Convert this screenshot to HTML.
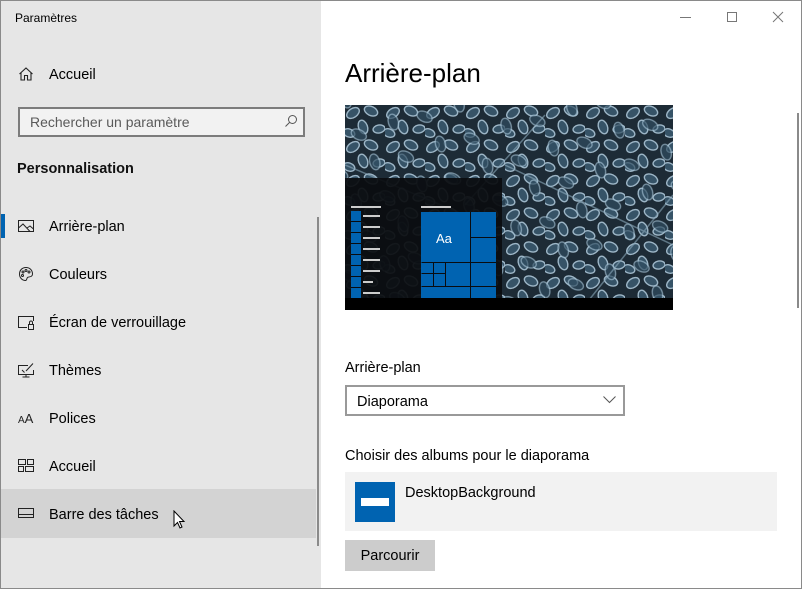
<!DOCTYPE html>
<html><head><meta charset="utf-8"><style>
*{margin:0;padding:0;box-sizing:border-box}
body{width:802px;height:589px;overflow:hidden;font-family:"Liberation Sans",sans-serif;color:#000;background:#fff;position:relative}
.win{position:absolute;left:0;top:0;width:802px;height:589px;border:1px solid #8a8a8a}
.left{position:absolute;left:1px;top:1px;width:320px;height:587px;background:#e6e6e6}
.abs{position:absolute}
.nav{position:absolute;left:48px;font-size:14.5px;color:#000}
.ic{position:absolute;left:17px}
</style></head><body>
<div class="win"></div>
<div class="left">
  <div class="abs" style="left:14px;top:10px;font-size:12px">Paramètres</div>
  <svg class="ic" style="left:17px;top:65px" width="16" height="16" viewBox="0 0 16 16" fill="none" stroke="#222" stroke-width="1.1"><path d="M1.5 8 L8 2 L14.5 8 M3 6.6 V14 H6.5 V9.5 H9.5 V14 H13 V6.6"/></svg>
  <div class="nav" style="top:66px">Accueil</div>
  <div class="abs" style="left:17px;top:106px;width:287px;height:30px;border:2px solid #7c7c7c;background:#f2f2f2"></div>
  <div class="abs" style="left:29px;top:113px;font-size:14px;color:#5a5a5a">Rechercher un paramètre</div>
  <svg class="abs" style="left:283px;top:113px" width="14" height="14" viewBox="0 0 14 14" fill="none" stroke="#555" stroke-width="1"><circle cx="8.5" cy="5.5" r="4"/><path d="M5.6 8.4 L1.5 12.5"/></svg>
  <div class="abs" style="left:16px;top:160px;font-size:14.5px;font-weight:bold;color:#111">Personnalisation</div>
  <div class="abs" style="left:0;top:213px;width:4px;height:24px;background:#0063b1"></div>
  <div class="abs" style="left:316px;top:216px;width:2px;height:329px;background:#8a8a8a"></div>
  <div class="abs" style="left:0;top:488px;width:315px;height:49px;background:#d3d3d3"></div>
  <svg class="ic" style="top:218px" width="17" height="15" viewBox="0 0 17 15" fill="none" stroke="#222" stroke-width="1"><rect x="0.5" y="1.5" width="15" height="11"/><path d="M0.5 9 L5 5 L12 12.5 M9 9 L12 7 L15.5 10"/></svg>
  <div class="nav" style="top:218px">Arrière-plan</div>
  <svg class="ic" style="top:265px" width="16" height="16" viewBox="0 0 16 16" fill="none" stroke="#222" stroke-width="1"><path d="M8 1.5 C3.5 1.5 1.5 5 1.5 8 C1.5 12 4.5 14.5 7.5 14.5 C9 14.5 8.5 12.5 9.5 11.5 C10.5 10.5 14.5 11.5 14.5 8 C14.5 4 11.5 1.5 8 1.5Z"/><circle cx="5" cy="6" r="1"/><circle cx="8" cy="4.5" r="1"/><circle cx="11" cy="6" r="1"/><circle cx="4.5" cy="9.5" r="1"/></svg>
  <div class="nav" style="top:266px">Couleurs</div>
  <svg class="ic" style="top:314px" width="17" height="16" viewBox="0 0 17 16" fill="none" stroke="#222" stroke-width="1"><path d="M9 12.5 H0.5 V1.5 H15.5 V6"/><rect x="10.5" y="9.5" width="5" height="5"/><path d="M11.5 9.5 V7.5 A1.5 1.5 0 0 1 14.5 7.5 V9.5"/></svg>
  <div class="nav" style="top:314px">Écran de verrouillage</div>
  <svg class="ic" style="top:361px" width="17" height="16" viewBox="0 0 17 16" fill="none" stroke="#222" stroke-width="1"><path d="M10 3.5 H0.5 V12.5 H15.5 V8 M8 12.5 V15 M4.5 15 H11.5 M8 9 L15 1.5 M4 8 L6.5 10.5"/></svg>
  <div class="nav" style="top:362px">Thèmes</div>
  <div class="abs" style="left:17px;top:410px;font-size:10px;color:#222">A<span style="font-size:13px">A</span></div>
  <div class="nav" style="top:410px">Polices</div>
  <svg class="ic" style="top:458px" width="17" height="14" viewBox="0 0 17 14" fill="none" stroke="#222" stroke-width="1"><rect x="0.5" y="0.5" width="7" height="5"/><rect x="9.5" y="0.5" width="6" height="5"/><rect x="0.5" y="7.5" width="5" height="5"/><rect x="7.5" y="7.5" width="8" height="5"/></svg>
  <div class="nav" style="top:458px">Accueil</div>
  <svg class="ic" style="top:507px" width="17" height="12" viewBox="0 0 17 12" fill="none" stroke="#222" stroke-width="1"><rect x="0.5" y="0.5" width="15" height="9"/><path d="M0.5 6.5 H15.5"/></svg>
  <div class="nav" style="top:506px">Barre des tâches</div>
  <svg class="abs" style="left:172px;top:509px" width="14" height="20" viewBox="0 0 14 20"><path d="M1 1 V16 L4.5 12.5 L7 18 L9 17 L6.5 11.5 L11 11.5 Z" fill="#fff" stroke="#000" stroke-width="1"/></svg>
</div>
<svg class="abs" style="left:680px;top:11px" width="110" height="14" viewBox="0 0 110 14" fill="none" stroke="#777" stroke-width="1"><path d="M0 6.5 H11"/><rect x="47.5" y="1.5" width="9" height="9"/><path d="M93 1 L103 11 M103 1 L93 11"/></svg>
<div class="abs" style="left:797px;top:113px;width:2px;height:195px;background:#8a8a8a"></div>
<div class="abs" style="left:345px;top:58px;font-size:26px;color:#000">Arrière-plan</div>
<svg class="abs" style="left:345px;top:105px" width="328" height="205" viewBox="0 0 328 205">
  <defs>
    <pattern id="lv" width="40" height="34" patternUnits="userSpaceOnUse">
      <g fill="#3a5a70" stroke="#b4cfe0" stroke-width="1.4">
        <ellipse cx="8" cy="8" rx="7" ry="4.5" transform="rotate(-35 8 8)"/>
        <ellipse cx="26" cy="6" rx="7" ry="4.5" transform="rotate(25 26 6)"/>
        <ellipse cx="18" cy="22" rx="7" ry="4.5" transform="rotate(70 18 22)"/>
        <ellipse cx="34" cy="24" rx="6" ry="4" transform="rotate(-10 34 24)"/>
        <ellipse cx="4" cy="28" rx="6" ry="4" transform="rotate(20 4 28)"/>
      </g>
    </pattern>
    <pattern id="lv2" width="52" height="44" patternUnits="userSpaceOnUse" patternTransform="rotate(25) translate(13 9)">
      <g fill="#2f4c60" stroke="#9fbdd0" stroke-width="1.3">
        <ellipse cx="12" cy="12" rx="8" ry="5"/>
        <ellipse cx="38" cy="30" rx="8" ry="5" transform="rotate(50 38 30)"/>
      </g>
    </pattern>
  </defs>
  <rect width="328" height="205" fill="#1d2b36"/>
  <rect width="328" height="205" fill="url(#lv)" opacity="0.85"/>
  <rect width="328" height="205" fill="url(#lv2)" opacity="0.7"/>
  <g stroke="#8aa8bb" stroke-width="1.5" fill="none" opacity="0.6"><path d="M0 60 L120 110 M160 60 L328 140 M200 10 L120 100 M240 200 L328 90"/></g>
  <rect x="0" y="73" width="157" height="120" fill="#0a0c0f" opacity="0.93"/>
  <rect x="0" y="193" width="328" height="12" fill="#000"/>
  <g fill="#ccc"><rect x="6" y="101" width="30" height="2"/><rect x="76" y="101" width="30" height="2"/>
  <rect x="18" y="110" width="17" height="2"/><rect x="18" y="121" width="17" height="2"/><rect x="18" y="132" width="17" height="2"/><rect x="18" y="143" width="17" height="2"/><rect x="18" y="154" width="17" height="2"/><rect x="18" y="165" width="17" height="2"/><rect x="18" y="176" width="10" height="2"/><rect x="18" y="187" width="17" height="2"/></g>
  <rect x="6" y="106" width="10" height="87" fill="#0063b1"/>
  <rect x="76" y="107" width="75" height="86" fill="#0063b1"/>
  <g stroke="#0a0c0f" stroke-width="1"><path d="M6 116.5 H16 M6 127.5 H16 M6 138.5 H16 M6 149.5 H16 M6 160.5 H16 M6 171.5 H16 M6 182.5 H16"/>
  <path d="M125.5 107 V193 M125.5 132.5 H151 M76.5 157.5 H151 M76.5 168.5 H100 M76.5 181.5 H151 M88.5 157.5 V181.5 M100.5 157.5 V181.5"/></g>
  <text x="91" y="138" fill="#fff" font-size="13" font-family="Liberation Sans">Aa</text>
</svg>
<div class="abs" style="left:345px;top:360px;font-size:14.5px">Arrière-plan</div>
<div class="abs" style="left:345px;top:385px;width:280px;height:31px;border:2px solid #999;background:#fff"></div>
<div class="abs" style="left:357px;top:394px;font-size:14.5px">Diaporama</div>
<svg class="abs" style="left:603px;top:396px" width="13" height="8" viewBox="0 0 13 8" fill="none" stroke="#555" stroke-width="1"><path d="M0.5 0.5 L6.5 6.5 L12.5 0.5"/></svg>
<div class="abs" style="left:345px;top:448px;font-size:14.5px">Choisir des albums pour le diaporama</div>
<div class="abs" style="left:345px;top:472px;width:432px;height:59px;background:#f2f2f2"></div>
<div class="abs" style="left:355px;top:482px;width:40px;height:40px;background:#0063b1"></div>
<div class="abs" style="left:361px;top:498px;width:28px;height:8px;background:#fff"></div>
<div class="abs" style="left:405px;top:485px;font-size:14.5px">DesktopBackground</div>
<div class="abs" style="left:345px;top:540px;width:90px;height:31px;background:#ccc;font-size:14.5px;text-align:center;line-height:32px">Parcourir</div>
</body></html>
